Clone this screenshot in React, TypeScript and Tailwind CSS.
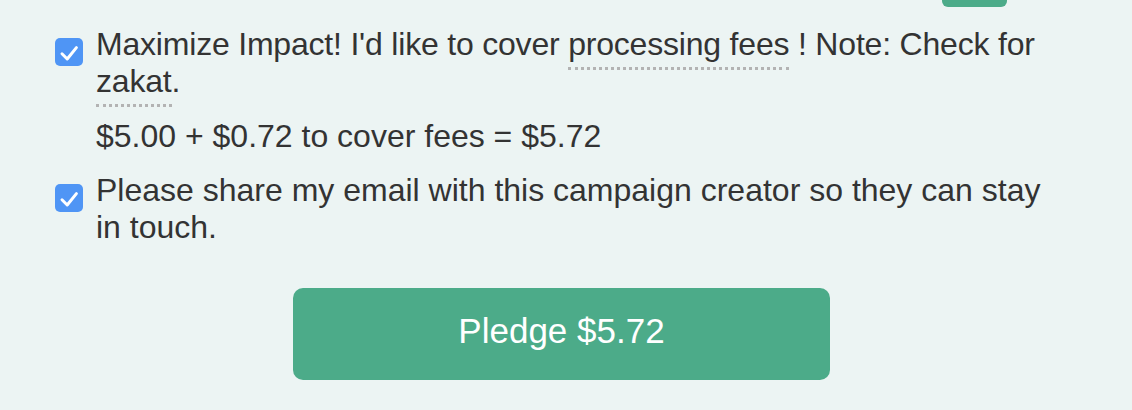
import React from "react";

function Check() {
  return (
    <span className="mt-[12px] block h-[28px] w-[28px] shrink-0 rounded-[5px] bg-[#4f95f5]">
      <svg width="28" height="28" viewBox="0 0 28 28" fill="none">
        <path d="M7 15.8 L12.2 21 L21.4 9.6" stroke="white" strokeWidth="3" strokeLinecap="round" strokeLinejoin="round" />
      </svg>
    </span>
  );
}

const dotted = "border-b-[3px] border-dotted border-[#b3b3b3] pb-[5px]";

export default function App() {
  return (
    <div className="relative h-[410px] w-[1132px] overflow-hidden bg-[#ecf4f3] font-['Liberation_Sans',Arial,sans-serif] text-[#333333]">
      <div className="flex h-[26px] justify-end pr-[125px]">
        <div className="-mt-[33px] h-[40px] w-[65px] rounded-[6px] bg-[#4cab89]" />
      </div>

      <div className="ml-[55px] w-[1010px]">
        <label className="flex gap-[13px]">
          <Check />
          <p className="text-[32px] leading-[37px] tracking-[-0.2px]">
            Maximize Impact! I'd like to cover <span className={dotted}>processing fees</span> ! Note: Check for{" "}
            <span className={dotted}>zakat</span>.
          </p>
        </label>

        <p className="ml-[41px] mt-[18px] text-[32px] leading-[37px]">$5.00 + $0.72 to cover fees = $5.72</p>

        <label className="mt-[17px] flex gap-[13px]">
          <Check />
          <p className="text-[32px] leading-[37px]">
            Please share my email with this campaign creator so they can stay in touch.
          </p>
        </label>
      </div>

      <div className="mt-[42px] flex pl-[293px]">
        <button className="h-[92px] w-[537px] rounded-[10px] bg-[#4cab89] pb-[5px] text-[35px] text-white">
          Pledge $5.72
        </button>
      </div>
    </div>
  );
}
